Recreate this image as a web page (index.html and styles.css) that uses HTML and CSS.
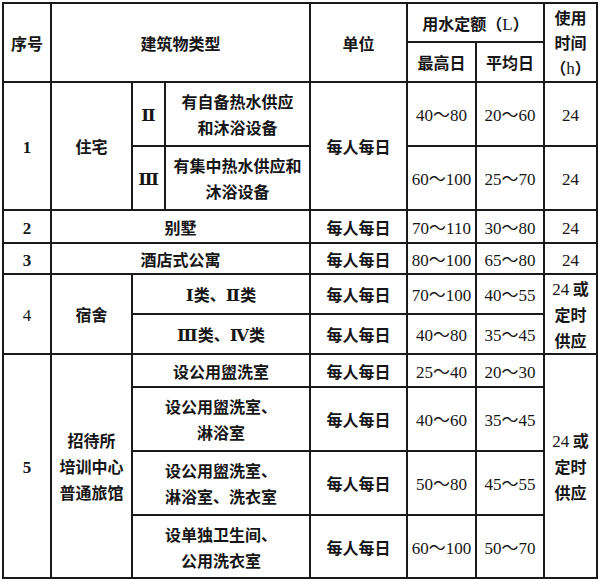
FILE: index.html
```html
<!DOCTYPE html>
<html lang="zh-CN">
<head>
<meta charset="utf-8">
<title>用水定额</title>
<link rel="stylesheet" href="styles.css">
</head>
<body>
<table class="quota">
  <colgroup>
    <col class="c1"><col class="c2"><col class="c3"><col class="c4"><col class="c5"><col class="c6"><col class="c7"><col class="c8">
  </colgroup>
  <tr class="h1">
    <td rowspan="2">序号</td>
    <td rowspan="2" colspan="3">建筑物类型</td>
    <td rowspan="2">单位</td>
    <td colspan="2">用水定额（<span class="n">L</span>）</td>
    <td rowspan="2" class="tight">使用<br>时间<br>（<span class="n">h</span>）</td>
  </tr>
  <tr class="h2">
    <td>最高日</td>
    <td>平均日</td>
  </tr>
  <tr class="r64">
    <td rowspan="2"><span class="n b">1</span></td>
    <td rowspan="2">住宅</td>
    <td><span class="roman">Ⅱ</span></td>
    <td>有自备热水供应<br>和沐浴设备</td>
    <td rowspan="2">每人每日</td>
    <td><span class="n">40～80</span></td>
    <td><span class="n">20～60</span></td>
    <td><span class="n">24</span></td>
  </tr>
  <tr class="r64">
    <td><span class="roman">Ⅲ</span></td>
    <td>有集中热水供应和<br>沐浴设备</td>
    <td><span class="n">60～100</span></td>
    <td><span class="n">25～70</span></td>
    <td><span class="n">24</span></td>
  </tr>
  <tr class="r33">
    <td><span class="n b">2</span></td>
    <td colspan="3">别墅</td>
    <td>每人每日</td>
    <td><span class="n">70～110</span></td>
    <td><span class="n">30～80</span></td>
    <td><span class="n">24</span></td>
  </tr>
  <tr class="r31">
    <td><span class="n b">3</span></td>
    <td colspan="3">酒店式公寓</td>
    <td>每人每日</td>
    <td><span class="n">80～100</span></td>
    <td><span class="n">65～80</span></td>
    <td><span class="n">24</span></td>
  </tr>
  <tr class="r40">
    <td rowspan="2"><span class="n">4</span></td>
    <td rowspan="2">宿舍</td>
    <td colspan="2"><span class="roman">Ⅰ</span>类、<span class="roman">Ⅱ</span>类</td>
    <td>每人每日</td>
    <td><span class="n">70～100</span></td>
    <td><span class="n">40～55</span></td>
    <td rowspan="2"><span class="n">24</span> 或<br>定时<br>供应</td>
  </tr>
  <tr class="r40">
    <td colspan="2"><span class="roman">Ⅲ</span>类、<span class="roman">Ⅳ</span>类</td>
    <td>每人每日</td>
    <td><span class="n">40～80</span></td>
    <td><span class="n">35～45</span></td>
  </tr>
  <tr class="r33">
    <td rowspan="4"><span class="n b">5</span></td>
    <td rowspan="4">招待所<br>培训中心<br>普通旅馆</td>
    <td colspan="2">设公用盥洗室</td>
    <td>每人每日</td>
    <td><span class="n">25～40</span></td>
    <td><span class="n">20～30</span></td>
    <td rowspan="4"><span class="n">24</span> 或<br>定时<br>供应</td>
  </tr>
  <tr class="r64">
    <td colspan="2">设公用盥洗室、<br>淋浴室</td>
    <td>每人每日</td>
    <td><span class="n">40～60</span></td>
    <td><span class="n">35～45</span></td>
  </tr>
  <tr class="r64">
    <td colspan="2">设公用盥洗室、<br>淋浴室、洗衣室</td>
    <td>每人每日</td>
    <td><span class="n">50～80</span></td>
    <td><span class="n">45～55</span></td>
  </tr>
  <tr class="r63">
    <td colspan="2">设单独卫生间、<br>公用洗衣室</td>
    <td>每人每日</td>
    <td><span class="n">60～100</span></td>
    <td><span class="n">50～70</span></td>
  </tr>
</table>
</body>
</html>
```

FILE: styles.css
```css
html, body {
  margin: 0;
  padding: 0;
  background: #fff;
}

.quota {
  border-collapse: collapse;
  table-layout: fixed;
  width: 596px;
  margin: 2px 0 0 2px;
  font-family: "Noto Sans CJK SC", sans-serif;
  font-weight: 700;
  font-size: 16px;
  color: #161616;
}

.quota td {
  border: 2px solid #1a1a1a;
  padding: 0;
  text-align: center;
  vertical-align: middle;
  line-height: 26px;
  white-space: nowrap;
}

.quota td.tight {
  line-height: 25px;
}

.c1 { width: 48px; }
.c2 { width: 81px; }
.c3 { width: 33px; }
.c4 { width: 145px; }
.c5 { width: 97px; }
.c6 { width: 69px; }
.c7 { width: 68px; }
.c8 { width: 53px; }

.h1 { height: 39px; }
.h2 { height: 40px; }
.r64 { height: 64px; }
.r63 { height: 63px; }
.r40 { height: 40px; }
.r33 { height: 33px; }
.r31 { height: 31px; }

.n {
  font-family: "Liberation Serif", "Noto Sans CJK SC", serif;
  font-weight: 400;
  font-size: 17px;
  line-height: 17px;
}

.n.b {
  font-weight: 700;
}

.roman {
  font-family: "DejaVu Serif", "Liberation Serif", serif;
  font-weight: 700;
  font-size: 17px;
  line-height: 17px;
}
```
